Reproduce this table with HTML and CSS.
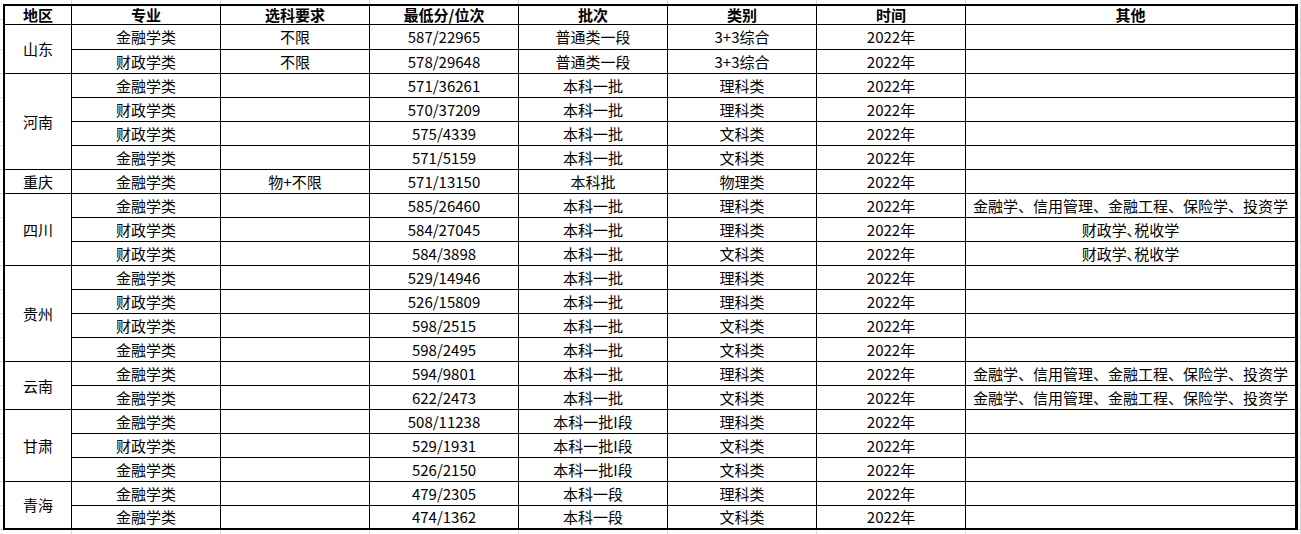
FILE: index.html
```html
<!DOCTYPE html>
<html lang="zh-CN">
<head>
<meta charset="utf-8">
<title>分数线</title>
<link rel="stylesheet" href="styles.css">
</head>
<body>
<table class="sheet">
  <thead>
    <tr class="r-head">
      <th class="c-region">地区</th>
      <th class="c-mid">专业</th>
      <th class="c-mid">选科要求</th>
      <th class="c-mid">最低分/位次</th>
      <th class="c-mid">批次</th>
      <th class="c-mid">类别</th>
      <th class="c-mid">时间</th>
      <th class="c-last">其他</th>
    </tr>
  </thead>
  <tbody>
    <tr class="r-first"><td rowspan="2">山东</td><td>金融学类</td><td>不限</td><td>587/22965</td><td>普通类一段</td><td>3+3综合</td><td>2022年</td><td class="c-last"></td></tr>
    <tr><td>财政学类</td><td>不限</td><td>578/29648</td><td>普通类一段</td><td>3+3综合</td><td>2022年</td><td class="c-last"></td></tr>

    <tr><td rowspan="4">河南</td><td>金融学类</td><td></td><td>571/36261</td><td>本科一批</td><td>理科类</td><td>2022年</td><td class="c-last"></td></tr>
    <tr><td>财政学类</td><td></td><td>570/37209</td><td>本科一批</td><td>理科类</td><td>2022年</td><td class="c-last"></td></tr>
    <tr><td>财政学类</td><td></td><td>575/4339</td><td>本科一批</td><td>文科类</td><td>2022年</td><td class="c-last"></td></tr>
    <tr><td>金融学类</td><td></td><td>571/5159</td><td>本科一批</td><td>文科类</td><td>2022年</td><td class="c-last"></td></tr>

    <tr><td>重庆</td><td>金融学类</td><td>物+不限</td><td>571/13150</td><td>本科批</td><td>物理类</td><td>2022年</td><td class="c-last"></td></tr>

    <tr><td rowspan="3">四川</td><td>金融学类</td><td></td><td>585/26460</td><td>本科一批</td><td>理科类</td><td>2022年</td><td class="c-last">金融学、信用管理、金融工程、保险学、投资学</td></tr>
    <tr><td>财政学类</td><td></td><td>584/27045</td><td>本科一批</td><td>理科类</td><td>2022年</td><td class="c-last">财政学､税收学</td></tr>
    <tr><td>财政学类</td><td></td><td>584/3898</td><td>本科一批</td><td>文科类</td><td>2022年</td><td class="c-last">财政学､税收学</td></tr>

    <tr><td rowspan="4">贵州</td><td>金融学类</td><td></td><td>529/14946</td><td>本科一批</td><td>理科类</td><td>2022年</td><td class="c-last"></td></tr>
    <tr><td>财政学类</td><td></td><td>526/15809</td><td>本科一批</td><td>理科类</td><td>2022年</td><td class="c-last"></td></tr>
    <tr><td>财政学类</td><td></td><td>598/2515</td><td>本科一批</td><td>文科类</td><td>2022年</td><td class="c-last"></td></tr>
    <tr><td>金融学类</td><td></td><td>598/2495</td><td>本科一批</td><td>文科类</td><td>2022年</td><td class="c-last"></td></tr>

    <tr><td rowspan="2">云南</td><td>金融学类</td><td></td><td>594/9801</td><td>本科一批</td><td>理科类</td><td>2022年</td><td class="c-last">金融学、信用管理、金融工程、保险学、投资学</td></tr>
    <tr><td>金融学类</td><td></td><td>622/2473</td><td>本科一批</td><td>文科类</td><td>2022年</td><td class="c-last">金融学、信用管理、金融工程、保险学、投资学</td></tr>

    <tr><td rowspan="3">甘肃</td><td>金融学类</td><td></td><td>508/11238</td><td>本科一批I段</td><td>理科类</td><td>2022年</td><td class="c-last"></td></tr>
    <tr><td>财政学类</td><td></td><td>529/1931</td><td>本科一批I段</td><td>文科类</td><td>2022年</td><td class="c-last"></td></tr>
    <tr><td>金融学类</td><td></td><td>526/2150</td><td>本科一批I段</td><td>文科类</td><td>2022年</td><td class="c-last"></td></tr>

    <tr><td rowspan="2" class="b-end">青海</td><td>金融学类</td><td></td><td>479/2305</td><td>本科一段</td><td>理科类</td><td>2022年</td><td class="c-last"></td></tr>
    <tr class="r-last"><td>金融学类</td><td></td><td>474/1362</td><td>本科一段</td><td>文科类</td><td>2022年</td><td class="c-last"></td></tr>
  </tbody>
</table>
</body>
</html>
```

FILE: styles.css
```css
html, body {
  margin: 0;
  padding: 0;
  height: 100%;
}

body {
  font-family: "Noto Sans CJK SC", "Noto Sans", sans-serif;
  font-size: 15px;
  color: #000;
  background-color: #fff;
  background-image:
    linear-gradient(#dadada, #dadada),
    linear-gradient(#dadada, #dadada),
    linear-gradient(#dadada, #dadada),
    linear-gradient(#dadada, #dadada),
    linear-gradient(#dadada, #dadada),
    linear-gradient(#dadada, #dadada),
    linear-gradient(#dadada, #dadada),
    linear-gradient(#dadada, #dadada),
    repeating-linear-gradient(to bottom, transparent 0 23px, #dadada 23px 24px);
  background-position:
    71px 0, 220px 0, 369px 0, 518px 0, 667px 0, 816px 0, 965px 0, 1300px 0,
    0 26px;
  background-size:
    1px 100%, 1px 100%, 1px 100%, 1px 100%, 1px 100%, 1px 100%, 1px 100%, 1px 100%,
    100% 100%;
  background-repeat:
    no-repeat, no-repeat, no-repeat, no-repeat, no-repeat, no-repeat, no-repeat, no-repeat,
    repeat;
}

.sheet {
  margin: 4px 0 0 3px;
  border-collapse: separate;
  border-spacing: 0;
  border-style: solid;
  border-color: #000;
  border-width: 2px 3px 2px 2px;
  background: #fff;
}

.sheet th,
.sheet td {
  box-sizing: border-box;
  padding: 0;
  text-align: center;
  vertical-align: middle;
  white-space: nowrap;
  line-height: 18px;
  border-right: 1px solid #000;
  border-bottom: 1px solid #000;
  font-weight: 400;
}

.sheet th {
  font-weight: 700;
}

.sheet .c-region { width: 67px; }
.sheet .c-mid { width: 149px; }
.sheet .c-last { width: 329px; border-right: none; }

.sheet tr { height: 24px; }
.sheet .r-head { height: 19px; }
.sheet .r-first { height: 25px; }
.sheet .r-last { height: 22px; }

.sheet .r-last td,
.sheet .b-end {
  border-bottom: none;
}
```
